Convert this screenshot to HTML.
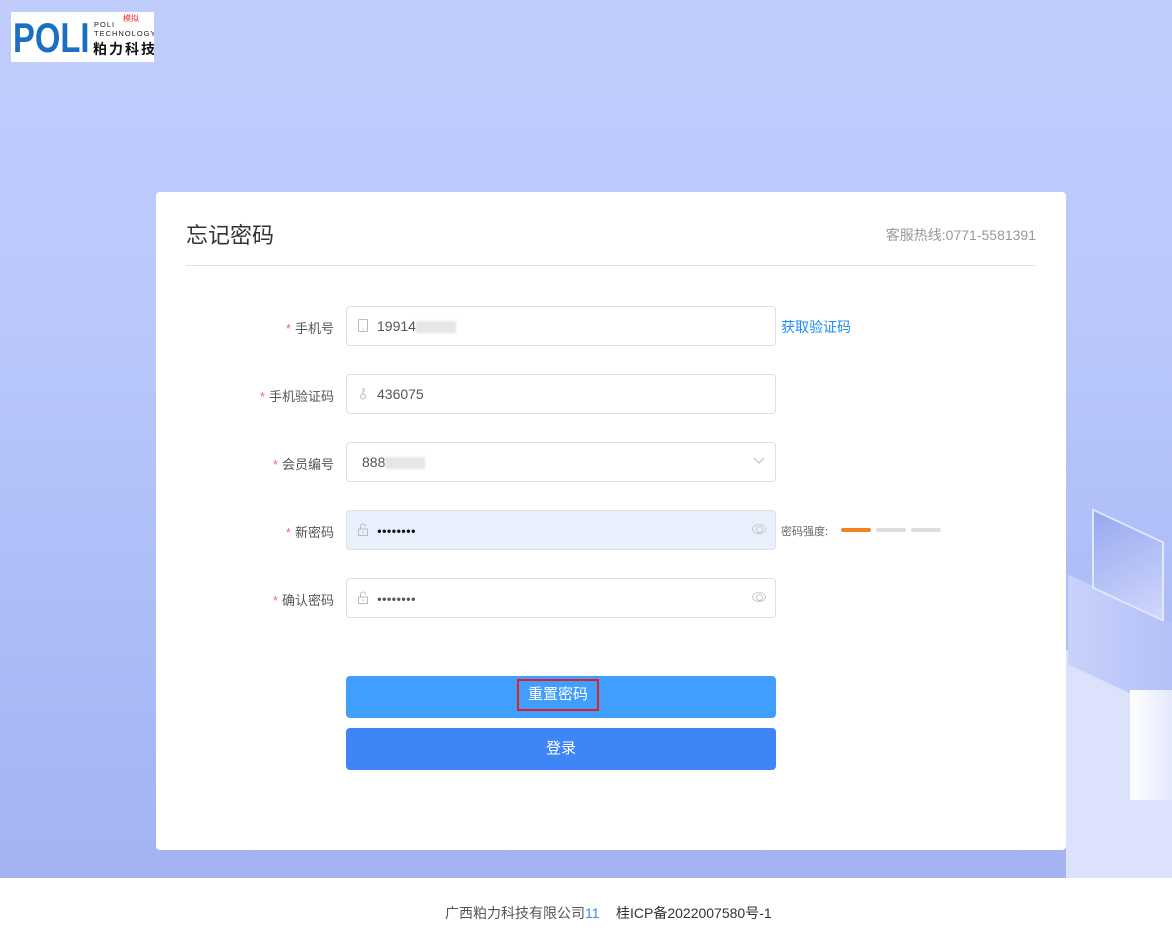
<!DOCTYPE html>
<html><head><meta charset="utf-8"><style>
*{margin:0;padding:0;box-sizing:border-box}
body{width:1172px;height:944px;overflow:hidden;font-family:"Liberation Sans","Noto Sans CJK SC",sans-serif;position:relative;background:#fff}
.bg{position:absolute;left:0;top:0;width:1172px;height:878px;background:linear-gradient(180deg,#c0cdfc 0%,#bac8fb 35%,#aebef7 65%,#a3b3f3 100%);overflow:hidden}
.logo{position:absolute;left:11px;top:12px;width:143px;height:50px;background:#fff;white-space:nowrap;overflow:hidden}
.logo .p{position:absolute;left:2px;top:5px;font:bold 42px/42px "Liberation Sans",sans-serif;color:#1b6fc2;transform:scaleX(.78);transform-origin:left}
.logo .t{position:absolute;left:83px;top:8px;font-size:7.5px;line-height:9px;letter-spacing:1px;color:#222}
.logo .c{position:absolute;left:82px;top:28px;font-size:14px;line-height:18px;color:#111;letter-spacing:2px;font-weight:bold}
.logo .m{position:absolute;left:112px;top:1px;font-size:8px;color:#e33}
.card{position:absolute;left:156px;top:192px;width:910px;height:658px;background:#fff;border-radius:4px}
.title{position:absolute;left:30px;top:26px;font-size:22px;color:#333}
.hot{position:absolute;right:30px;top:33px;font-size:14px;color:#999}
.hr{position:absolute;left:30px;right:30px;top:73px;border-top:1px solid #e4e4e4}
.lbl{position:absolute;width:178px;text-align:right;font-size:13px;color:#555}
.lbl b{color:#f56c6c;font-weight:normal;margin-right:4px}
.in{position:absolute;left:190px;width:430px;height:40px;border:1px solid #dcdfe6;border-radius:4px;font-size:14px;color:#555;padding-left:30px;line-height:38px}
.ic{position:absolute;left:11px;top:12px;width:10px;height:13px}
.btn{position:absolute;left:190px;width:430px;height:42px;border-radius:4px;color:#fff;font-size:15px;text-align:center;line-height:42px}
.blur{display:inline-block;width:36px;height:12px;background:#e6e6e6;vertical-align:middle;filter:blur(1px)}
.eye{position:absolute;right:9px;top:13px;width:14px;height:10px;border:1.5px solid #c9c9c9;border-radius:50%}
.eye:after{content:"";position:absolute;left:3px;top:1px;width:5px;height:5px;border:1.5px solid #c9c9c9;border-radius:50%}
.dots{font-size:8px;letter-spacing:0;vertical-align:middle}
.foot{position:absolute;top:903px;font-size:14px;color:#555;white-space:nowrap}
</style></head><body>
<div class="bg">
<div style="position:absolute;left:1066px;top:650px;width:110px;height:230px;background:#dce2fb"></div>
<div style="position:absolute;left:1068px;top:600px;width:110px;height:90px;background:linear-gradient(90deg,#c9d2fb,#b2c0f7);transform:skewY(25deg)"></div>
<div style="position:absolute;left:1092px;top:525px;width:72px;height:80px;background:linear-gradient(135deg,#98a8ef,#cfd8fc);transform:skewY(25deg);border:2px solid #e2e8fd"></div>
<div style="position:absolute;left:1130px;top:690px;width:42px;height:110px;background:linear-gradient(90deg,#fff,#e3e8fd)"></div>
</div>
<div class="logo"><div class="p">POLI</div><div class="m">模拟</div><div class="t">POLI<br>TECHNOLOGY</div><div class="c">粕力科技</div></div>
<div class="card">
<div class="title">忘记密码</div>
<div class="hot">客服热线:0771-5581391</div>
<div class="hr"></div>

<div class="lbl" style="top:126px"><b>*</b>手机号</div>
<div class="in" style="top:114px"><svg class="ic" viewBox="0 0 10 13"><rect x="0.5" y="0.5" width="9" height="12" rx="1" fill="none" stroke="#bbb"/><circle cx="5" cy="10.5" r=".7" fill="#bbb"/></svg>19914<span class="blur" style="width:40px"></span></div>
<div style="position:absolute;left:625px;top:125px;font-size:14px;color:#1a8ef3">获取验证码</div>

<div class="lbl" style="top:194px"><b>*</b>手机验证码</div>
<div class="in" style="top:182px"><svg class="ic" viewBox="0 0 10 13"><path d="M5 1v6M5 2h2M5 4h2" stroke="#bbb" fill="none"/><circle cx="5" cy="9.5" r="2.5" fill="none" stroke="#bbb"/></svg>436075</div>

<div class="lbl" style="top:262px"><b>*</b>会员编号</div>
<div class="in" style="top:250px;padding-left:15px">888<span class="blur" style="width:40px"></span><svg style="position:absolute;right:10px;top:14px" width="12" height="8" viewBox="0 0 12 8"><path d="M1 1l5 5 5-5" stroke="#bbb" fill="none"/></svg></div>

<div class="lbl" style="top:330px"><b>*</b>新密码</div>
<div class="in" style="top:318px;background:#e8f0fe;color:#111"><svg class="ic" viewBox="0 0 10 13"><path d="M2.5 6V3.5a2.5 2.5 0 0 1 5 0" stroke="#bbb" fill="none"/><rect x="0.5" y="6" width="9" height="6.5" fill="none" stroke="#bbb"/><path d="M5 8.5v2" stroke="#bbb"/></svg><span class="dots">●●●●●●●●</span><span class="eye"></span></div>
<div style="position:absolute;left:625px;top:331px;font-size:11px;color:#666">密码强度:</div>
<div style="position:absolute;left:685px;top:336px;width:30px;height:4px;border-radius:2px;background:#f5831b"></div>
<div style="position:absolute;left:720px;top:336px;width:30px;height:4px;border-radius:2px;background:#ddd"></div>
<div style="position:absolute;left:755px;top:336px;width:30px;height:4px;border-radius:2px;background:#ddd"></div>

<div class="lbl" style="top:398px"><b>*</b>确认密码</div>
<div class="in" style="top:386px;color:#555"><svg class="ic" viewBox="0 0 10 13"><path d="M2.5 6V3.5a2.5 2.5 0 0 1 5 0" stroke="#bbb" fill="none"/><rect x="0.5" y="6" width="9" height="6.5" fill="none" stroke="#bbb"/><path d="M5 8.5v2" stroke="#bbb"/></svg><span class="dots">●●●●●●●●</span><span class="eye"></span></div>

<div class="btn" style="top:484px;background:#409eff"><span style="position:absolute;left:171px;top:3px;width:82px;height:32px;border:2px solid #e02020;line-height:28px">重置密码</span></div>
<div class="btn" style="top:536px;background:#3e86f5">登录</div>
</div>
<div class="foot" style="left:445px">广西粕力科技有限公司<span style="color:#3e86f5">11</span></div>
<div class="foot" style="left:616px;color:#333">桂ICP备2022007580号-1</div>
</body></html>
